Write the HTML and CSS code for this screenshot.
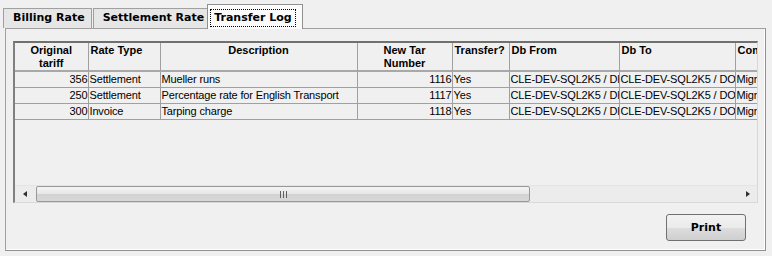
FILE: index.html
```html
<!DOCTYPE html>
<html lang="en">
<head>
    <meta charset="UTF-8">
    <title>Transfer Log</title>
    <link rel="stylesheet" href="styles.css">
</head>
<body>
    <div class="tabs">
        <div class="tab">Billing Rate</div>
        <div class="tab">Settlement Rate</div>
        <div class="tab active"><span class="focus">Transfer Log</span></div>
    </div>
    <div class="panel">
        <div class="grid">
            <div class="grid-body">
                <table>
                    <colgroup>
                        <col class="c1"><col class="c2"><col class="c3"><col class="c4">
                        <col class="c5"><col class="c6"><col class="c7"><col class="c8">
                    </colgroup>
                    <thead>
                        <tr>
                            <th class="center">Original<br>tariff</th>
                            <th>Rate Type</th>
                            <th class="center">Description</th>
                            <th class="center">New Tar<br>Number</th>
                            <th>Transfer?</th>
                            <th>Db From</th>
                            <th>Db To</th>
                            <th>Comment</th>
                        </tr>
                    </thead>
                    <tbody>
                        <tr>
                            <td class="num">356</td><td>Settlement</td><td>Mueller runs</td><td class="num">1116</td>
                            <td>Yes</td><td>CLE-DEV-SQL2K5 / DEV</td><td>CLE-DEV-SQL2K5 / DOC</td><td>Migrated</td>
                        </tr>
                        <tr>
                            <td class="num">250</td><td>Settlement</td><td>Percentage rate for English Transport</td><td class="num">1117</td>
                            <td>Yes</td><td>CLE-DEV-SQL2K5 / DEV</td><td>CLE-DEV-SQL2K5 / DOC</td><td>Migrated</td>
                        </tr>
                        <tr>
                            <td class="num">300</td><td>Invoice</td><td>Tarping charge</td><td class="num">1118</td>
                            <td>Yes</td><td>CLE-DEV-SQL2K5 / DEV</td><td>CLE-DEV-SQL2K5 / DOC</td><td>Migrated</td>
                        </tr>
                    </tbody>
                </table>
            </div>
            <div class="hscroll">
                <div class="arrow left"></div>
                <div class="track">
                    <div class="thumb"><span class="grip"></span></div>
                </div>
                <div class="arrow right"></div>
            </div>
        </div>
        <div class="actions">
            <button class="print">Print</button>
        </div>
    </div>
</body>
</html>
```

FILE: styles.css
```css
body {
    margin: 0;
    background: #f0f0f0;
    width: 772px;
    height: 256px;
    overflow: hidden;
    font-family: "Liberation Sans", Arial, sans-serif;
}

.tabs {
    display: flex;
    align-items: flex-end;
    height: 28px;
    padding-left: 3px;
    position: relative;
    z-index: 1;
}

.tab {
    height: 19px;
    line-height: 18px;
    padding: 0 6px 0 9px;
    border: 1px solid #a0a0a0;
    border-bottom: none;
    background: #e6e6e6;
    font-family: "DejaVu Sans", Tahoma, sans-serif;
    font-weight: bold;
    font-size: 11px;
    color: #000;
    margin-right: 1px;
}

.tab.active {
    height: 24px;
    background: #fbfbfb;
    padding: 0 6px 0 2px;
    margin-bottom: -1px;
    margin-left: -5px;
    margin-right: 0;
    border-color: #909090;
}

.focus {
    display: inline-block;
    margin-top: 4px;
    line-height: 16px;
    padding: 0 3px;
    border: 1px dotted #000;
}

.panel {
    margin-left: 5px;
    width: 752px;
    height: 209px;
    border: 1px solid #a0a0a0;
    border-right-color: #909090;
    border-bottom-color: #909090;
    box-shadow: inset -1px -1px 0 #fff;
    background: #f0f0f0;
    padding: 12px 0 0 7px;
}

.grid {
    width: 742px;
    height: 159px;
    border-top: 2px solid #707070;
    border-left: 2px solid #808080;
    border-right: 1px solid #d8d8d8;
    border-bottom: 1px solid #d8d8d8;
    display: flex;
    flex-direction: column;
}

.grid-body {
    flex: 1;
    overflow: hidden;
}

table {
    border-collapse: collapse;
    table-layout: fixed;
    width: 820px;
    font-size: 11px;
}

.c1 { width: 73px; }
.c2 { width: 72px; }
.c3 { width: 197px; }
.c4 { width: 95px; }
.c5 { width: 57px; }
.c6 { width: 110px; }
.c7 { width: 116px; }
.c8 { width: 100px; }

th {
    height: 26px;
    vertical-align: top;
    text-align: left;
    font-weight: bold;
    font-size: 11px;
    line-height: 13px;
    padding: 1px 2px 0;
    border-right: 1px solid #a0a0a0;
    border-bottom: 2px solid #a8a8a8;
    white-space: nowrap;
    overflow: hidden;
}

th.center {
    text-align: center;
}

td {
    height: 15px;
    padding: 0 1px;
    line-height: 15px;
    letter-spacing: -0.15px;
    border-right: 1px solid #a0a0a0;
    border-bottom: 1px solid #a0a0a0;
    white-space: nowrap;
    overflow: hidden;
    color: #000;
}

td.num {
    text-align: right;
    padding-right: 0;
}

.hscroll {
    height: 16px;
    display: flex;
    background: #ececec;
    border-top: 1px solid #e4e4e4;
}

.arrow {
    width: 20px;
    position: relative;
}

.arrow::after {
    content: "";
    position: absolute;
    top: 5px;
    border-top: 3px solid transparent;
    border-bottom: 3px solid transparent;
}

.arrow.left::after {
    left: 8px;
    border-right: 4px solid #303030;
}

.arrow.right::after {
    left: 9px;
    border-left: 4px solid #303030;
}

.track {
    flex: 1;
    padding: 0 1px;
}

.thumb {
    width: 492px;
    height: 14px;
    border: 1px solid #989898;
    border-radius: 2px;
    background: linear-gradient(#f4f4f4, #e6e6e6 50%, #d2d2d2 51%, #d8d8d8);
    display: flex;
    justify-content: center;
    align-items: center;
}

.grip {
    width: 7px;
    height: 7px;
    background: repeating-linear-gradient(90deg, #606060 0 1px, transparent 1px 3px);
}

.actions {
    display: flex;
    justify-content: flex-end;
    padding: 11px 19px 0 0;
}

.print {
    width: 80px;
    height: 27px;
    border: 1px solid #707070;
    border-radius: 3px;
    background: linear-gradient(#f2f2f2, #ebebeb 50%, #dddddd 51%, #cfcfcf);
    font-family: "DejaVu Sans", Tahoma, sans-serif;
    font-weight: bold;
    font-size: 11px;
    color: #000;
    padding: 0;
}
```
